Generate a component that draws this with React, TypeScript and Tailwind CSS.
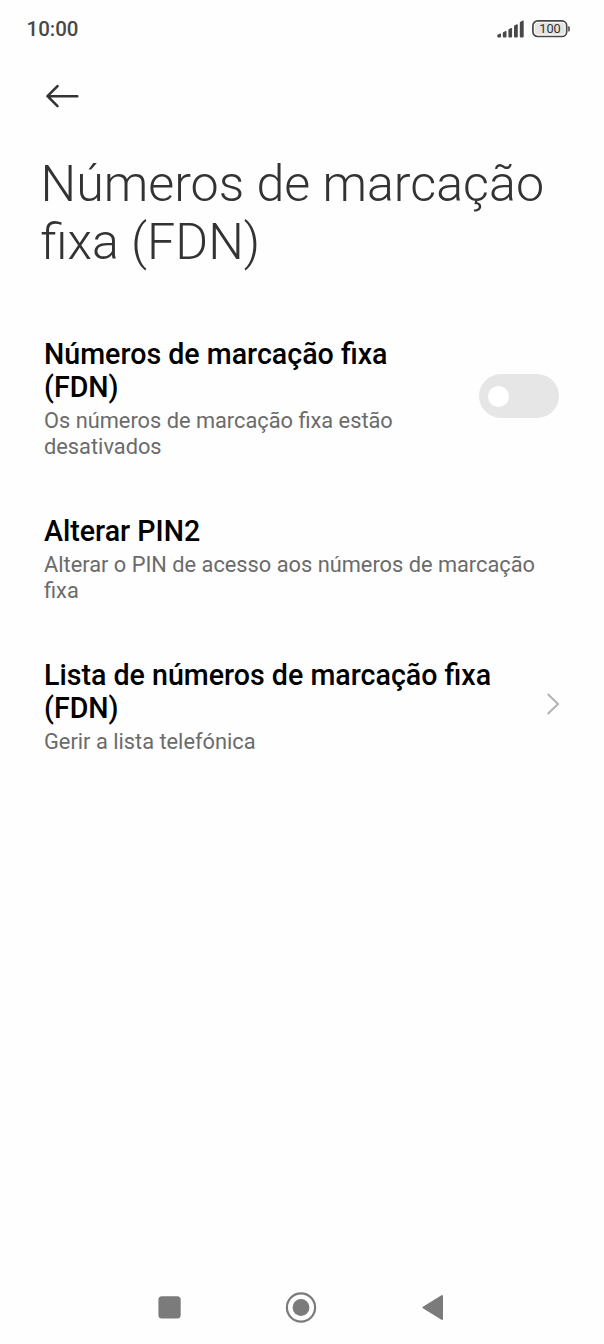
import React from "react";

function Row({ title, summary, className, children }: { title: React.ReactNode; summary: React.ReactNode; className: string; children?: React.ReactNode }) {
  return (
    <section className={`flex items-center justify-between pl-11 ${className}`}>
      <div className="whitespace-nowrap">
        <h2 className="pt-px text-[28.6px] leading-[33px] font-medium text-black">{title}</h2>
        <p className="mt-1 text-[21.8px] leading-[26px] text-[#6b6b6b]">{summary}</p>
      </div>
      {children}
    </section>
  );
}

export default function App() {
  return (
    <div className="flex h-[1344px] w-[604px] flex-col bg-[#fefefe] font-['Roboto',sans-serif]">
      <header className="flex h-[58px] items-center justify-between pr-[34px] pl-[26.5px]">
        <span className="text-[20.5px] font-medium text-[#484848]">10:00</span>
        <div className="flex items-center">
          <svg width="27" height="18" viewBox="0 0 27 18" fill="#484848">
            <path d="M0.3 15.5Q0.3 14.8 1 14.5L3.2 13.5Q4 13.3 4 14V16.5Q4 17.5 3 17.5H1.3Q0.3 17.5 0.3 16.5Z" />
            <path d="M5.8 13Q5.8 12.3 6.5 12L8.7 11Q9.5 10.8 9.5 11.5V16.5Q9.5 17.5 8.5 17.5H6.8Q5.8 17.5 5.8 16.5Z" />
            <path d="M11.4 10Q11.4 9.3 12.1 9L14.3 8Q15.1 7.8 15.1 8.5V16.5Q15.1 17.5 14.1 17.5H12.4Q11.4 17.5 11.4 16.5Z" />
            <path d="M17 6.5Q17 5.8 17.7 5.3L19.9 4.2Q20.8 4 20.8 4.8V16.5Q20.8 17.5 19.8 17.5H18Q17 17.5 17 16.5Z" />
            <path d="M22.8 3Q22.8 2.2 23.5 1.7L25.8 .6Q26.7 .3 26.7 1.2V16.5Q26.7 17.5 25.7 17.5H23.8Q22.8 17.5 22.8 16.5Z" />
          </svg>
          <div className="relative ml-2 h-[18px] w-[38px]">
            <svg className="absolute inset-0" width="38" height="18" viewBox="0 0 38 18">
              <rect x="0.9" y="0.9" width="33.8" height="15.6" rx="4.8" fill="#fefefe" stroke="#484848" strokeWidth="1.7" />
              <rect x="2.8" y="2.8" width="30" height="11.8" rx="3" fill="#e4e4e4" />
              <path d="M36.2 6.2H36.6Q37.8 6.2 37.8 7.4V10.2Q37.8 11.4 36.6 11.4H36.2Z" fill="#484848" />
            </svg>
            <span className="absolute inset-y-0 left-0 w-[36px] text-center text-[12.8px] leading-[17px] text-[#333]">100</span>
          </div>
        </div>
      </header>
      <div className="h-[97px] pt-[26px] pl-[46px]">
        <svg width="34" height="24" viewBox="0 0 34 24" fill="none" stroke="#333" strokeWidth="2.5" strokeLinecap="round" strokeLinejoin="round">
          <path d="M31.3 12.2H1.6M11.5 2.2L1.5 12.2L11.5 22.2" />
        </svg>
      </div>
      <h1 className="h-[182px] pl-[40.5px] text-[50.2px] leading-[58px] font-light whitespace-nowrap text-[#333]">Números de marcação<br />fixa (FDN)</h1>
      <Row className="h-[123px]" title={<>Números de marcação fixa<br />(FDN)</>} summary={<>Os números de marcação fixa estão<br />desativados</>}>
        <div className="mr-[45px] mb-[5px] flex h-11 w-20 items-center rounded-full bg-[#e6e6e6] pl-[9px]">
          <div className="size-[21px] rounded-full bg-white" />
        </div>
      </Row>
      <Row className="mt-[54px] h-[90px]" title="Alterar PIN2" summary={<>Alterar o PIN de acesso aos números de marcação<br />fixa</>} />
      <Row className="mt-[54px] h-[97px]" title={<>Lista de números de marcação fixa<br />(FDN)</>} summary="Gerir a lista telefónica">
        <svg className="mr-[44px] mb-[5px]" width="14" height="24" viewBox="0 0 14 24" fill="none" stroke="#b3b3b3" strokeWidth="2"><path d="M1.7 2L12 12L1.7 22" /></svg>
      </Row>
      <nav className="mt-auto flex h-[74px] items-center justify-between pr-[160px] pl-[158px]">
        <svg width="23" height="24" viewBox="0 0 23 24" fill="#7b7b7b"><rect x="0.4" y="1.2" width="22.3" height="22.3" rx="3.5" /></svg>
        <svg className="mr-px" width="32" height="32" viewBox="0 0 32 32" fill="#7b7b7b"><circle cx="16" cy="16.5" r="14.1" fill="none" stroke="#7b7b7b" strokeWidth="2.2" /><circle cx="16" cy="16.5" r="8.4" /></svg>
        <svg width="22" height="28" viewBox="0 0 22 28" fill="#7b7b7b" stroke="#7b7b7b" strokeWidth="2" strokeLinejoin="round"><path d="M1.4 14.5L20 3V26Z" /></svg>
      </nav>
    </div>
  );
}
